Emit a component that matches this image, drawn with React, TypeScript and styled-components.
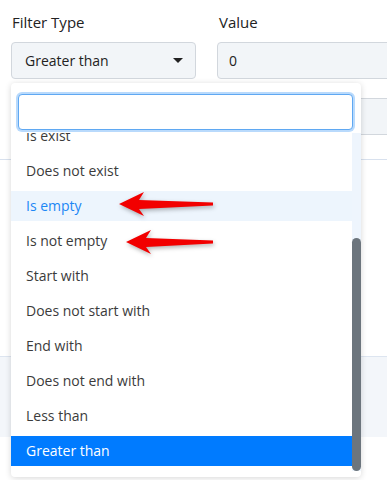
import React, {useLayoutEffect, useRef} from "react";
import styled, {createGlobalStyle} from "styled-components";

const GlobalStyle = createGlobalStyle`
  html, body {
    margin: 0;
    padding: 0;
    background: #fff;
    overflow: hidden;
  }
  body {
    font-family: "Open Sans", "Liberation Sans", sans-serif;
    color: #212529;
  }
`;

const OPTIONS = [
  'Equals',
  'Not equals',
  'Contains',
  'Does not contain',
  'Is exist',
  'Does not exist',
  'Is empty',
  'Is not empty',
  'Start with',
  'Does not start with',
  'End with',
  'Does not end with',
  'Less than',
  'Greater than',
];

const Page = styled.div`
  position: relative;
  width: 387px;
  height: 480px;
  overflow: hidden;
`;

const Form = styled.div`
  padding: 12px 0 0 11px;
`;

const FieldGrid = styled.div`
  display: grid;
  grid-template-columns: 185px 240px;
  column-gap: 21px;
`;

const Label = styled.div`
  font-size: 15px;
  line-height: 20px;
  color: #222;
  padding-left: 1px;
  margin-bottom: 10px;
  &:nth-child(2) {
    padding-left: 2px;
  }
`;

const SelectBox = styled.div`
  height: 37px;
  box-sizing: border-box;
  border: 1px solid #d2d7dd;
  border-radius: 4px;
  background: #f2f5f8;
  display: flex;
  align-items: center;
  justify-content: space-between;
  padding: 0 12px 0 13px;
  font-size: 14px;
  color: #222;
`;

const Caret = styled.span`
  width: 0;
  height: 0;
  border-left: 5px solid transparent;
  border-right: 5px solid transparent;
  border-top: 5px solid #222;
`;

const InputBox = styled.div<{$top?: number}>`
  height: 37px;
  box-sizing: border-box;
  border: 1px solid #d2d7dd;
  border-radius: 4px;
  background: #f2f5f8;
  display: flex;
  align-items: center;
  padding: 0 11px;
  font-size: 14px;
  color: #222;
  margin-top: ${p => p.$top || 0}px;
`;

const Divider = styled.div`
  height: 1px;
  background: #d8e1ee;
  margin-top: 24px;
`;

const Footer = styled.div`
  margin-top: 196px;
  height: 80px;
  background: #f3f6fa;
  border-top: 1px solid #dde5f0;
`;

const Dropdown = styled.div`
  position: absolute;
  left: 11px;
  top: 83px;
  width: 350px;
  box-sizing: border-box;
  background: #fff;
  border-radius: 4px;
  box-shadow: 0 1px 6px rgba(0, 0, 0, 0.16);
  padding: 11px 0 6px;
  display: flex;
  flex-direction: column;
  gap: 3px;
`;

const Search = styled.input`
  margin: 0 8px 0 7px;
  height: 36px;
  box-sizing: border-box;
  border: 1px solid #5fa8f2;
  border-radius: 4px;
  box-shadow: 0 0 0 2px #b9dafc;
  outline: none;
  font: inherit;
  font-size: 14px;
`;

const ListFrame = styled.div`
  display: flex;
  height: 338px;
`;

const List = styled.ul`
  flex: 1;
  list-style: none;
  margin: 0;
  padding: 0;
  overflow: hidden;
`;

const ScrollTrack = styled.div`
  width: 9px;
  background: #eef5fd;
  display: flex;
  flex-direction: column;
  justify-content: flex-end;
`;

const ScrollThumb = styled.div`
  background: #6c757d;
  border-radius: 5px;
`;

const Option = styled.li<{$state?: 'hover' | 'selected'}>`
  height: 30px;
  line-height: 30px;
  margin-bottom: 5px;
  padding-left: 15px;
  font-size: 14px;
  color: ${p => p.$state === 'selected' ? '#fff' : p.$state === 'hover' ? '#1c87f5' : '#3b3b3b'};
  background: ${p => p.$state === 'selected' ? '#007bff' : p.$state === 'hover' ? '#edf5fd' : 'transparent'};
  white-space: nowrap;
`;

const Annotations = styled.svg`
  position: absolute;
  left: 0;
  top: 0;
  pointer-events: none;
  filter: drop-shadow(1px 2px 2px rgba(0, 0, 0, 0.3));
`;

function Arrow({x, y, tail}: {x: number; y: number; tail: number}) {
  const pts = [
    [x, y],
    [x + 25, y - 12],
    [x + 20, y - 4],
    [tail, y - 1.5],
    [tail, y + 1.5],
    [x + 20, y + 5],
    [x + 25, y + 12],
  ].map(p => p.join(',')).join(' ');
  return <polygon points={pts} fill="#f20000"/>;
}

export default function App() {
  const listRef = useRef<HTMLUListElement>(null);
  const [thumb, setThumb] = React.useState(232);

  useLayoutEffect(() => {
    const el = listRef.current;
    if (!el) return;
    el.scrollTop = el.scrollHeight;
    setThumb(Math.round(el.clientHeight * el.clientHeight / el.scrollHeight));
  }, []);

  return (
    <Page>
      <GlobalStyle/>
      <Form>
        <FieldGrid>
          <Label>Filter Type</Label>
          <Label>Value</Label>
          <SelectBox>Greater than<Caret/></SelectBox>
          <InputBox>0</InputBox>
          <div/>
          <InputBox $top={19}/>
        </FieldGrid>
      </Form>
      <Divider/>
      <Footer/>

      <Dropdown>
        <Search/>
        <ListFrame>
          <List ref={listRef}>
            {OPTIONS.map(o => (
              <Option key={o} $state={o === 'Is empty' ? 'hover' : o === 'Greater than' ? 'selected' : undefined}>
                {o}
              </Option>
            ))}
          </List>
          <ScrollTrack>
            <ScrollThumb style={{height: thumb}}/>
          </ScrollTrack>
        </ListFrame>
      </Dropdown>

      <Annotations width={387} height={480}>
        <Arrow x={119} y={204} tail={213}/>
        <Arrow x={126} y={242} tail={213}/>
      </Annotations>
    </Page>
  );
}
